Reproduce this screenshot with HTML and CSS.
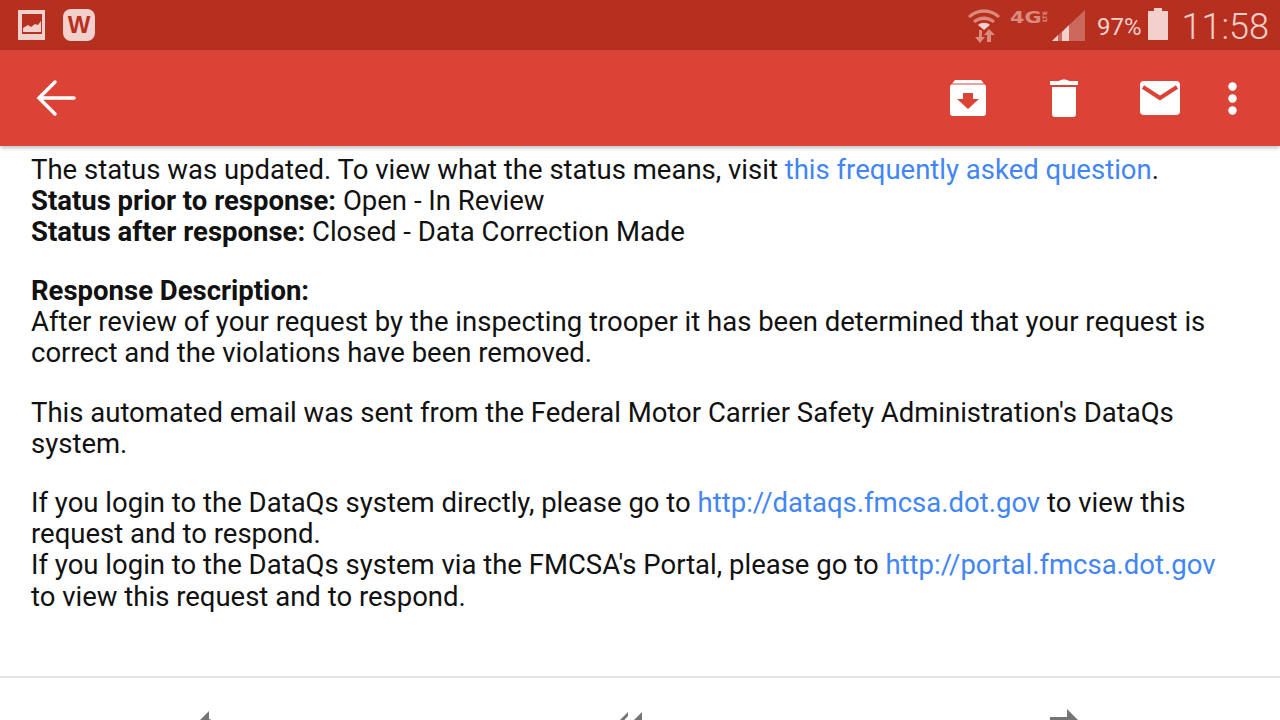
FILE: index.html
```html
<!DOCTYPE html>
<html lang="en">

<head>
    <meta charset="UTF-8">
    <meta name="viewport" content="width=device-width, initial-scale=1.0">
    <title>Message</title>
    <link rel="stylesheet" href="styles.css">
</head>

<body>
    <div class="status-bar">
        <div class="status-left">
            <svg class="icon-picture" width="27" height="30" viewBox="0 0 27 30">
                <path fill-rule="evenodd" d="M0 0h27v30H0zM4 4v20h20V4z"/>
                <path d="M5 22v-4l5-3 3 2 4-3 3 1 3-4v11z"/>
            </svg>
            <div class="icon-word">W</div>
        </div>
        <div class="status-right">
            <svg class="icon-wifi" width="34" height="36" viewBox="0 0 34 36">
                <path d="M1 9C10 0 24 0 33 9l-2 2C23 4 11 4 3 11z"/>
                <path d="M6 14c6-6 16-6 22 0l-2 2c-5-4-13-4-18 0z"/>
                <path d="M11 18c3-3 9-3 12 0l-6 5z" fill="#f2d0cb"/>
                <path d="M12 23v7H8l5 6 5-6h-3v-7z"/>
                <path d="M22 22l-5 6h3v7h4v-7h4z"/>
            </svg>
            <div class="net-type"><span class="net-4g">4G</span><span class="net-lte">LTE</span></div>
            <svg class="icon-signal" width="33" height="31" viewBox="0 0 33 31">
                <path d="M33 0v31H0z" opacity=".35"/>
                <path d="M6 25v6H0zM17 15v16H10v-9z" fill="#f2d0cb"/>
            </svg>
            <span class="battery-text">97%</span>
            <svg class="icon-battery" width="20" height="32" viewBox="0 0 20 32">
                <path d="M6 0h8v3h6v29H0V3h6z"/>
            </svg>
            <span class="clock">11:58</span>
        </div>
    </div>

    <div class="app-bar">
        <svg class="icon-back" width="40" height="40" viewBox="0 0 40 40">
            <path d="M38 20H3M19 4L3 20l16 16" fill="none" stroke="#fff" stroke-width="3.500" stroke-linecap="round"/>
        </svg>
        <div class="app-actions">
            <svg class="icon-archive" width="36" height="36" viewBox="0 0 36 36">
                <path fill="#fff" d="M5 0h26l5 6v27a3 3 0 0 1-3 3H3a3 3 0 0 1-3-3V6zM2 3.500l-.5 1h33l-.5-1z"/>
                <path fill="#dc4337" d="M13 14h10v6h6L18 30 7 20h6z" transform="translate(0 -1)"/>
            </svg>
            <svg class="icon-trash" width="28" height="38" viewBox="0 0 28 38">
                <path fill="#fff" d="M9 2c2-2 8-2 10 0h9v4H0V2zM2 8h24v27a3 3 0 0 1-3 3H5a3 3 0 0 1-3-3z"/>
            </svg>
            <svg class="icon-mail" width="40" height="34" viewBox="0 0 40 34">
                <path fill="#fff" d="M4 0h32a4 4 0 0 1 4 4v26a4 4 0 0 1-4 4H4a4 4 0 0 1-4-4V4a4 4 0 0 1 4-4z"/>
                <path fill="none" stroke="#dc4337" stroke-width="4" d="M3 6l17 11L37 6"/>
            </svg>
            <svg class="icon-more" width="9" height="33" viewBox="0 0 9 33">
                <circle cx="4.500" cy="4.500" r="4.200" fill="#fff"/>
                <circle cx="4.500" cy="16.500" r="4.200" fill="#fff"/>
                <circle cx="4.500" cy="28.500" r="4.200" fill="#fff"/>
            </svg>
        </div>
    </div>

    <div class="mail-body">
        <p>The status was updated. To view what the status means, visit <a href="#">this frequently asked question</a>.<br>
            <b>Status prior to response:</b> Open - In Review<br>
            <b>Status after response:</b> Closed - Data Correction Made</p>
        <p><b>Response Description:</b><br>
            After review of your request by the inspecting trooper it has been determined that your request is correct and the violations have been removed.</p>
        <p>This automated email was sent from the Federal Motor Carrier Safety Administration's DataQs system.</p>
        <p>If you login to the DataQs system directly, please go to <a href="#">http://dataqs.fmcsa.dot.gov</a> to view this request and to respond.<br>
            If you login to the DataQs system via the FMCSA's Portal, please go to <a href="#">http://portal.fmcsa.dot.gov</a> to view this request and to respond.</p>
    </div>

    <div class="mail-actions">
        <svg class="reply" width="36" height="32" viewBox="0 0 36 32"><path d="M21 0L5 16l16 16v-8c6 0 10 1 14 5-1-10-6-19-14-21z"/></svg>
        <svg class="reply-all" width="50" height="32" viewBox="0 0 50 32"><path d="M18 0L2 16l16 16v-4L7 16 18 4z"/><path d="M32 0L16 16l16 16v-8c6 0 10 1 14 5-1-10-6-19-14-21z"/></svg>
        <svg class="forward" width="40" height="32" viewBox="0 0 40 32"><path d="M17 0l16 16-16 16v-8H0V8h17z"/></svg>
    </div>
</body>

</html>
```

FILE: styles.css
```css
html, body {
    height: 720px;
}

body {
    font-family: Roboto, sans-serif;
    margin: 0;
    padding: 0;
    overflow: hidden;
    background-color: #fff;
    color: #111;
}

.status-bar {
    height: 50px;
    background-color: #b7301f;
    display: flex;
    justify-content: space-between;
    align-items: center;
    padding: 0 11px 0 18px;
}

.status-left {
    display: flex;
    align-items: center;
    gap: 18px;
    fill: #f2d0cb;
}

.icon-word {
    width: 32px;
    height: 32px;
    border-radius: 8px;
    background-color: #f2d0cb;
    color: #b7301f;
    font-family: "Liberation Sans", sans-serif;
    font-weight: bold;
    font-size: 24px;
    line-height: 32px;
    text-align: center;
}

.status-right {
    display: flex;
    align-items: center;
    color: #f2d0cb;
    fill: #f2d0cb;
}

.icon-wifi {
    fill: #dc8a7e;
    margin-right: 9px;
}

.net-type {
    display: flex;
    align-items: center;
    height: 13px;
    width: 42px;
    margin-top: -16px;
    font-family: "DejaVu Sans", sans-serif;
    font-weight: bold;
    color: #dc8a7e;
}

.net-4g {
    width: 31px;
    font-size: 16px;
    line-height: 13px;
    transform: scaleX(1.3);
    transform-origin: left center;
}

.net-lte {
    font-size: 6px;
    line-height: 7px;
    writing-mode: vertical-rl;
    transform: rotate(180deg);
}

.icon-signal {
    margin-right: 12px;
}

.battery-text {
    font-size: 24px;
    margin: 3px 6px 0 0;
}

.icon-battery {
    margin: -2px 14px 0 0;
}

.clock {
    font-size: 36px;
    font-weight: 300;
    margin-top: 3px;
}

.app-bar {
    height: 96px;
    background-color: #dc4337;
    box-shadow: 0 2px 4px rgba(0, 0, 0, 0.25);
    display: flex;
    justify-content: space-between;
    align-items: center;
    padding: 0 43px 0 36px;
}

.app-actions {
    display: flex;
    align-items: center;
}

.icon-trash {
    margin-left: 64px;
}

.icon-mail {
    margin-left: 62px;
}

.icon-more {
    margin-left: 48px;
}

.mail-body {
    padding: 7.600px 50px 0 31px;
    font-size: 27.500px;
    line-height: 31.150px;
    height: 522.400px;
    border-bottom: 2px solid #e6e6e6;
}

.mail-body p {
    margin: 0 0 28.100px;
}

.mail-body b {
    font-weight: 700;
}

.mail-body a {
    color: #4285f4;
    text-decoration: none;
}

.mail-actions {
    display: flex;
    align-items: flex-start;
    gap: 386px;
    padding: 31px 0 0 188px;
    fill: #757575;
}

.reply {
    margin-top: 2px;
}

.reply-all {
    margin-top: 3px;
}

.forward {
    margin-left: 4px;
}
```
